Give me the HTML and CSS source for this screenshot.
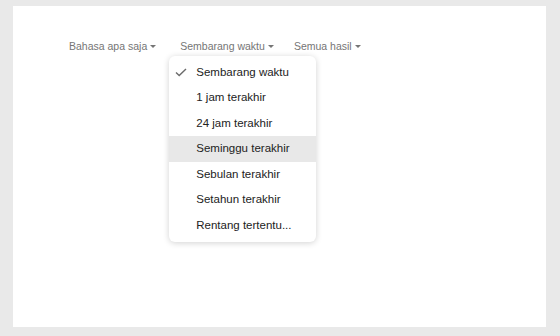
FILE: index.html
```html
<!DOCTYPE html>
<html lang="id">
<head>
    <meta charset="UTF-8">
    <title>Alat Penelusuran</title>
    <link rel="stylesheet" href="styles.css">
</head>
<body>
    <div class="page">
        <!-- Barisan filter -->
        <div class="tools">
            <div class="tool">Bahasa apa saja<span class="caret"></span></div>
            <div class="tool open">Sembarang waktu<span class="caret"></span>
                <ul class="menu">
                    <li class="selected">
                        <svg class="check" width="12" height="9" viewBox="0 0 12 9"><path d="M1 4.6 L4.2 7.6 L11 1" fill="none" stroke="#6b6b6b" stroke-width="1.4"/></svg>
                        Sembarang waktu
                    </li>
                    <li>1 jam terakhir</li>
                    <li>24 jam terakhir</li>
                    <li class="hover">Seminggu terakhir</li>
                    <li>Sebulan terakhir</li>
                    <li>Setahun terakhir</li>
                    <li>Rentang tertentu...</li>
                </ul>
            </div>
            <div class="tool">Semua hasil<span class="caret"></span></div>
        </div>
    </div>
</body>
</html>
```

FILE: styles.css
```css
body { margin: 0; background: #e9e9e9; font-family: "Liberation Sans", Arial, sans-serif; }
.page { background: #fff; margin: 6px 14px 0 13px; height: 321px; padding: 33px 0 0 56px; box-sizing: border-box; }
.tools { display: flex; gap: 24px; }
.tool { position: relative; font-size: 10.5px; line-height: 14px; color: #757575; }
.tool:last-child { margin-left: -4px; }
.caret { display: inline-block; vertical-align: middle; margin: -2px 0 0 3px; border-left: 3px solid transparent; border-right: 3px solid transparent; border-top: 3.5px solid #757575; }
.menu { position: absolute; left: -11px; top: 17px; width: 147px; margin: 0; padding: 3.5px 0 3px; list-style: none; background: #fff; border-radius: 6px; box-shadow: 0 1px 6px rgba(0,0,0,0.18); }
.menu li { position: relative; height: 25.6px; line-height: 25.6px; padding-left: 27px; font-size: 11.5px; color: #222; white-space: nowrap; }
.menu li.hover { background: #e8e8e8; }
.check { position: absolute; left: 6px; top: 8.5px; }
```
